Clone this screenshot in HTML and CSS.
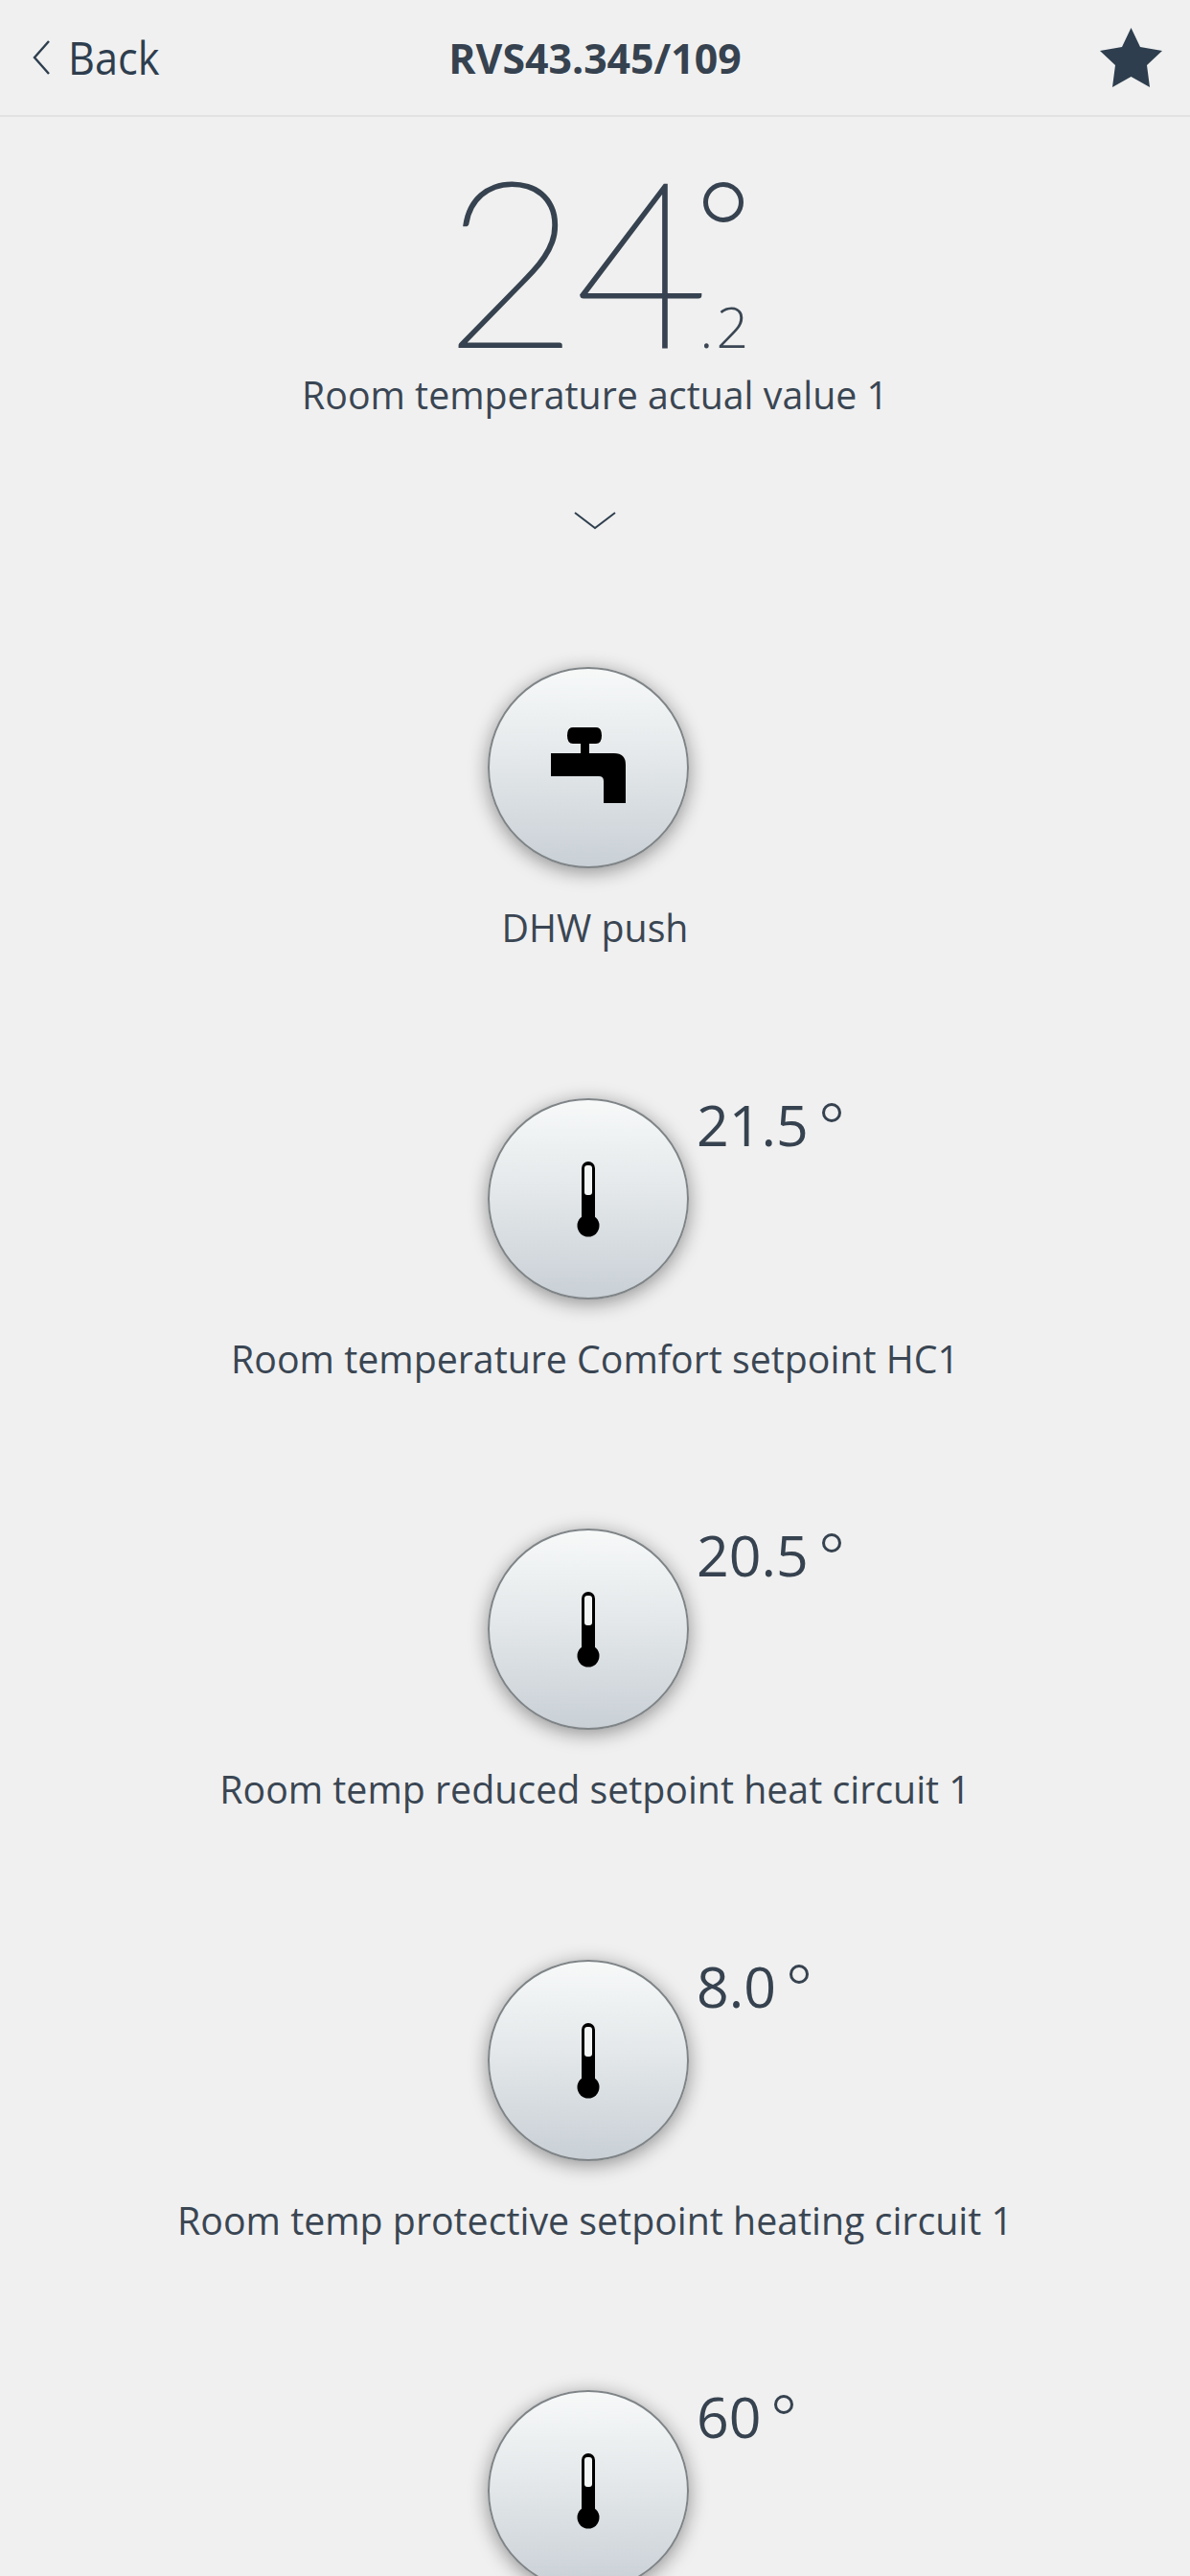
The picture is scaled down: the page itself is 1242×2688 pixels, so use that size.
FILE: index.html
```html
<!DOCTYPE html>
<html lang="en">
<head>
  <meta charset="UTF-8">
  <meta name="viewport" content="width=device-width, initial-scale=1.0">
  <title>RVS43.345/109</title>
  <link rel="stylesheet" href="styles.css">
</head>
<body>

<header class="topbar">
  <a class="back">
    <svg class="back-icon" width="18" height="36" viewBox="0 0 18 36"><path d="M17 1 L2 18 L17 35" fill="none" stroke="#2e3e4e" stroke-width="2.4"/></svg>
    <span class="back-text">Back</span>
  </a>
  <h1 class="title">RVS43.345/109</h1>
  <svg class="star" width="65" height="62" viewBox="0 0 65 62"><path d="M32.500 0 L42 20 L65 24 L49 39 L52 62 L32.500 51 L13 62 L16 39 L0 24 L23 20 Z" fill="#2e3e4e"/></svg>
</header>

<section class="actual">
  <div class="reading">
    <span class="whole">24</span>
    <span class="extras">
      <span class="deg"></span>
      <span class="tenth">.2</span>
    </span>
  </div>
  <p class="label actual-label">Room temperature actual value 1</p>
  <svg class="chevron" width="44" height="19" viewBox="0 0 44 19"><path d="M1 1 L22 17 L43 1" fill="none" stroke="#2e3e4e" stroke-width="2"/></svg>
</section>

<div class="item">
  <div class="item-top">
    <div class="round-btn">
      <svg class="round-icon" width="210" height="210" viewBox="0 0 210 210"><path d="M89 63 H113 Q119 63 119 71.500 Q119 80 113 80 H106 V90 H132 Q144 90 144 102 V142 H121 V119 Q121 114 116 114 H66 V90 H97 V80 H89 Q83 80 83 71.500 Q83 63 89 63 Z"/></svg>
    </div>
  </div>
  <p class="label">DHW push</p>
</div>

<div class="item">
  <div class="item-top">
    <div class="round-btn">
      <svg class="round-icon" width="210" height="210" viewBox="0 0 210 210"><rect x="98" y="66" width="14" height="67" rx="7"/><rect x="101" y="70" width="8" height="31" rx="3" fill="#f4f6f6"/><circle cx="105" cy="133" r="11.500"/></svg>
    </div>
    <span class="value">21.5<span class="value-deg"></span></span>
  </div>
  <p class="label">Room temperature Comfort setpoint HC1</p>
</div>

<div class="item">
  <div class="item-top">
    <div class="round-btn">
      <svg class="round-icon" width="210" height="210" viewBox="0 0 210 210"><rect x="98" y="66" width="14" height="67" rx="7"/><rect x="101" y="70" width="8" height="31" rx="3" fill="#f4f6f6"/><circle cx="105" cy="133" r="11.500"/></svg>
    </div>
    <span class="value">20.5<span class="value-deg"></span></span>
  </div>
  <p class="label">Room temp reduced setpoint heat circuit 1</p>
</div>

<div class="item">
  <div class="item-top">
    <div class="round-btn">
      <svg class="round-icon" width="210" height="210" viewBox="0 0 210 210"><rect x="98" y="66" width="14" height="67" rx="7"/><rect x="101" y="70" width="8" height="31" rx="3" fill="#f4f6f6"/><circle cx="105" cy="133" r="11.500"/></svg>
    </div>
    <span class="value">8.0<span class="value-deg"></span></span>
  </div>
  <p class="label">Room temp protective setpoint heating circuit 1</p>
</div>

<div class="item">
  <div class="item-top">
    <div class="round-btn">
      <svg class="round-icon" width="210" height="210" viewBox="0 0 210 210"><rect x="98" y="66" width="14" height="67" rx="7"/><rect x="101" y="70" width="8" height="31" rx="3" fill="#f4f6f6"/><circle cx="105" cy="133" r="11.500"/></svg>
    </div>
    <span class="value">60<span class="value-deg"></span></span>
  </div>
</div>

</body>
</html>
```

FILE: styles.css
```css
html, body {
  margin: 0;
  height: 2688px;
  overflow: hidden;
}
body {
  font-family: "Open Sans", Arial, sans-serif;
  background-color: #f0f0f0;
  color: #3a4653;
}
.topbar {
  height: 120px;
  display: flex;
  align-items: center;
  justify-content: space-between;
  padding: 0 29px 0 34px;
  border-bottom: 2px solid #e2e2e2;
  position: relative;
}
.back {
  display: flex;
  align-items: center;
  gap: 19px;
  font-size: 47px;
  color: #2e3e4e;
}
.back-text {
  transform: scaleX(0.92);
  transform-origin: left;
}
.title {
  position: absolute;
  left: 0;
  right: 0;
  margin: 0;
  text-align: center;
  font-size: 42.800px;
  font-weight: 700;
  color: #36424f;
}
.actual {
  height: 574px;
  display: flex;
  flex-direction: column;
  align-items: center;
}
.reading {
  display: flex;
  margin: 40px 0 0 6px;
  height: 208px;
}
.whole {
  font-family: Lato, sans-serif;
  font-weight: 100;
  font-size: 240px;
  line-height: 208px;
  letter-spacing: -3px;
  margin-top: 3px;
  -webkit-text-stroke: 3px #36424f;
  color: #36424f;
}
.extras {
  display: flex;
  flex-direction: column;
  justify-content: space-between;
  margin-left: -2px;
}
.deg {
  width: 42px;
  height: 42px;
  border: 5px solid #36424f;
  border-radius: 50%;
  box-sizing: border-box;
  margin-top: 28px;
}
.tenth {
  font-size: 59px;
  font-weight: 300;
  line-height: 60px;
  letter-spacing: 3px;
  margin-left: -4px;
}
.label {
  margin: 0;
  font-size: 39.300px;
  line-height: 54px;
  text-align: center;
  padding-top: 2px;
}
.actual-label {
  margin-top: 13px;
}
.chevron {
  margin-top: 95px;
}
.item {
  height: 449.500px;
}
.item-top {
  display: flex;
  padding-left: 509px;
  align-items: flex-start;
}
.round-btn {
  width: 210px;
  height: 210px;
  box-sizing: border-box;
  border: 2px solid #7f8487;
  border-radius: 50%;
  background: linear-gradient(#f7f9f9, #e4e8ea 45%, #c9d0d6);
  box-shadow: 0 4px 20px rgba(0, 0, 0, 0.4);
  flex: none;
}
.round-icon {
  display: block;
  margin: -2px;
}
.value {
  margin: -3px 0 0 8px;
  font-size: 59px;
  line-height: 60px;
  font-weight: 400;
  color: #36424f;
  display: flex;
}
.value-deg {
  width: 20px;
  height: 20px;
  border: 3px solid #36424f;
  border-radius: 50%;
  box-sizing: border-box;
  margin: 8px 0 0 14px;
}
.item .label {
  margin-top: 33px;
}
```
